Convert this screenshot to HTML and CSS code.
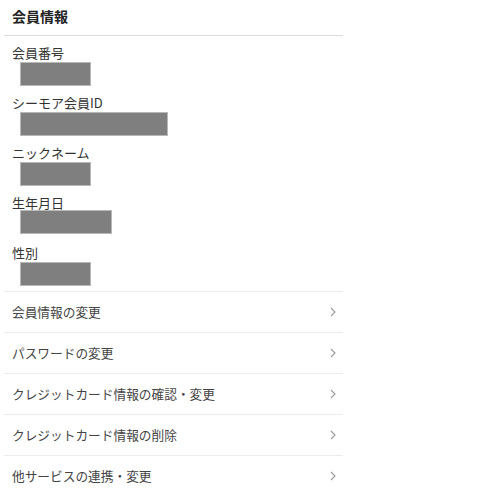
FILE: index.html
```html
<!DOCTYPE html>
<html lang="ja">
<head>
<meta charset="utf-8">
<title>会員情報</title>
<link rel="stylesheet" href="styles.css">
</head>
<body>
<div class="panel">
  <h1 class="title">会員情報</h1>
  <dl class="info">
    <div class="item"><dt class="label">会員番号</dt><dd class="value" style="width:71px"></dd></div>
    <div class="item"><dt class="label">シーモア会員ID</dt><dd class="value" style="width:148px"></dd></div>
    <div class="item"><dt class="label">ニックネーム</dt><dd class="value" style="width:71px"></dd></div>
    <div class="item"><dt class="label">生年月日</dt><dd class="value value--tight" style="width:92px"></dd></div>
    <div class="item"><dt class="label">性別</dt><dd class="value" style="width:71px"></dd></div>
  </dl>
  <ul class="menu">
    <li class="menu-item"><span class="menu-text">会員情報の変更</span><svg class="chev" width="6" height="10" viewBox="0 0 6 10"><path d="M1 1l4 4-4 4" fill="none" stroke="#9a9a9a" stroke-width="1.1"/></svg></li>
    <li class="menu-item"><span class="menu-text">パスワードの変更</span><svg class="chev" width="6" height="10" viewBox="0 0 6 10"><path d="M1 1l4 4-4 4" fill="none" stroke="#9a9a9a" stroke-width="1.1"/></svg></li>
    <li class="menu-item"><span class="menu-text">クレジットカード情報の確認・変更</span><svg class="chev" width="6" height="10" viewBox="0 0 6 10"><path d="M1 1l4 4-4 4" fill="none" stroke="#9a9a9a" stroke-width="1.1"/></svg></li>
    <li class="menu-item"><span class="menu-text">クレジットカード情報の削除</span><svg class="chev" width="6" height="10" viewBox="0 0 6 10"><path d="M1 1l4 4-4 4" fill="none" stroke="#9a9a9a" stroke-width="1.1"/></svg></li>
    <li class="menu-item"><span class="menu-text">他サービスの連携・変更</span><svg class="chev" width="6" height="10" viewBox="0 0 6 10"><path d="M1 1l4 4-4 4" fill="none" stroke="#9a9a9a" stroke-width="1.1"/></svg></li>
  </ul>
</div>
</body>
</html>
```
FILE: styles.css
```css
* { box-sizing: border-box; }
html, body { margin: 0; padding: 0; background: #fff; }
body {
  font-family: "Noto Sans CJK JP", "Noto Sans", sans-serif;
  color: #333;
}
.panel {
  width: 339px;
  margin-left: 4px;
}
.title {
  margin: 0;
  padding: 6px 8px 0;
  height: 36px;
  font-size: 14px;
  line-height: 20px;
  font-weight: 700;
  color: #222;
  border-bottom: 1px solid #dcdcdc;
}
.info {
  margin: 0;
  padding: 7px 8px 5px;
  border-bottom: 1px solid #ececec;
}
.item {
  display: flex;
  flex-direction: column;
  margin-bottom: 7px;
}
.item:last-child { margin-bottom: 0; }
.label {
  font-size: 13px;
  line-height: 19px;
  color: #333;
}
.value {
  margin: 0 0 0 8px;
  height: 24px;
  background: #7f7f7f;
  border: 1px solid #b8b8b8;
}
.value--tight { margin-top: -2px; margin-bottom: 2px; }
.menu {
  list-style: none;
  margin: 0;
  padding: 0;
}
.menu-item {
  display: flex;
  align-items: center;
  justify-content: space-between;
  height: 41px;
  padding: 0 7px 0 8px;
  font-size: 12.7px;
  color: #444;
  border-bottom: 1px solid #ececec;
}
.menu-text { margin-top: -2px; }
.menu-item:last-child { border-bottom: none; }
.chev { display: block; margin-top: -1px; }
```
